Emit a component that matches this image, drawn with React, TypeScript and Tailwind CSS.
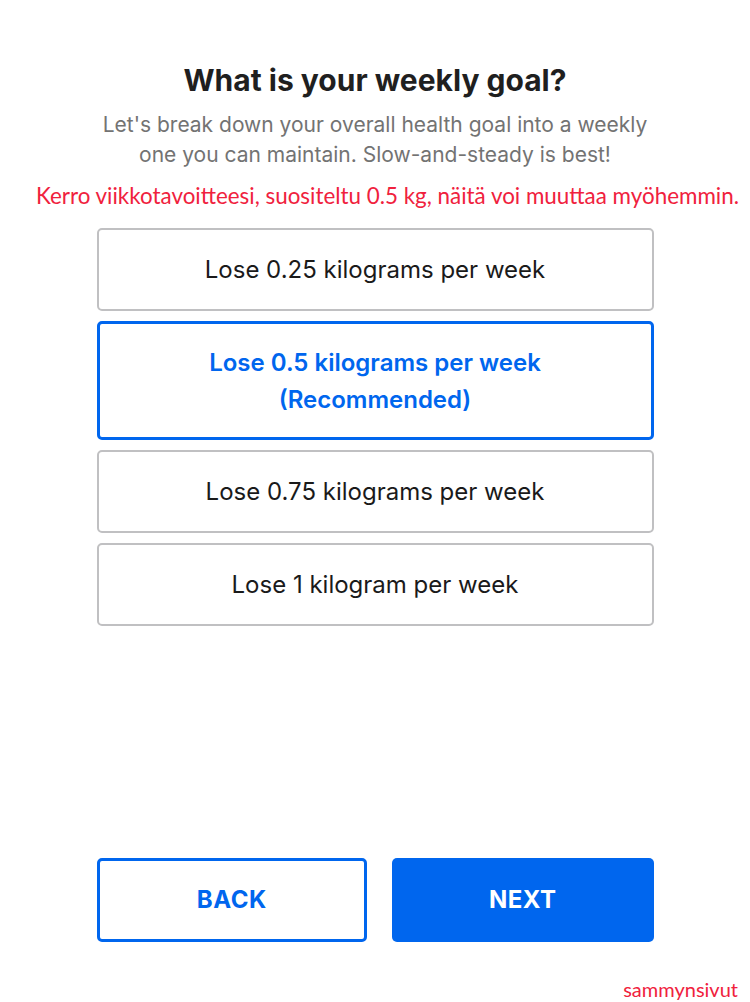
import React, { useState } from "react";

const OPTIONS = [
  { id: "0.25", label: "Lose 0.25 kilograms per week" },
  { id: "0.5", label: "Lose 0.5 kilograms per week", sub: "(Recommended)" },
  { id: "0.75", label: "Lose 0.75 kilograms per week" },
  { id: "1", label: "Lose 1 kilogram per week" },
];

export default function App() {
  const [selected, setSelected] = useState("0.5");

  return (
    <div className="min-h-screen w-[750px] h-[1002px] bg-white flex flex-col items-center font-['Inter',sans-serif] relative">
      <h1 className="mt-[62px] text-[30px] leading-[36px] font-bold text-[#1f1f1f]">
        What is your weekly goal?
      </h1>
      <p className="mt-[12px] w-[570px] text-center text-[21px] leading-[30px] text-[#737373]">
        Let's break down your overall health goal into a weekly one you can maintain. Slow-and-steady is best!
      </p>
      <p className="mt-[14px] ml-[25px] text-[22.4px] leading-[24px] text-[#f0213d] font-['Lato',sans-serif] whitespace-nowrap">
        Kerro viikkotavoitteesi, suositeltu 0.5 kg, näitä voi muuttaa myöhemmin.
      </p>

      <div className="mt-[20px] w-[557px] flex flex-col gap-[10px]">
        {OPTIONS.map((o) => {
          const active = o.id === selected;
          return (
            <button
              key={o.id}
              onClick={() => setSelected(o.id)}
              className={
                active
                  ? "w-full rounded-[5px] border-[3px] border-[#0066ee] bg-white py-[19.5px] text-[24px] leading-[37px] font-semibold text-[#0066ee]"
                  : "w-full h-[83px] rounded-[5px] border-[2.5px] border-[#c0c0c2] bg-white text-[24px] leading-[30px] text-[#1a1a1a]"
              }
            >
              <div>{o.label}</div>
              {o.sub && <div>{o.sub}</div>}
            </button>
          );
        })}
      </div>

      <div className="flex-1" />

      <div className="w-[557px] flex gap-[25px] mb-[60px]">
        <button className="w-[271px] h-[84px] rounded-[5px] border-[3px] border-[#0066ee] bg-white text-[24px] font-bold tracking-[0.5px] text-[#0066ee]">
          BACK
        </button>
        <button className="w-[262px] h-[84px] rounded-[5px] bg-[#0066ee] text-[24px] font-bold tracking-[0.5px] text-white">
          NEXT
        </button>
      </div>

      <span className="absolute right-[12px] bottom-[0px] text-[20px] leading-[26px] text-[#f0213d] font-['Lato',sans-serif]">
        sammynsivut
      </span>
    </div>
  );
}
